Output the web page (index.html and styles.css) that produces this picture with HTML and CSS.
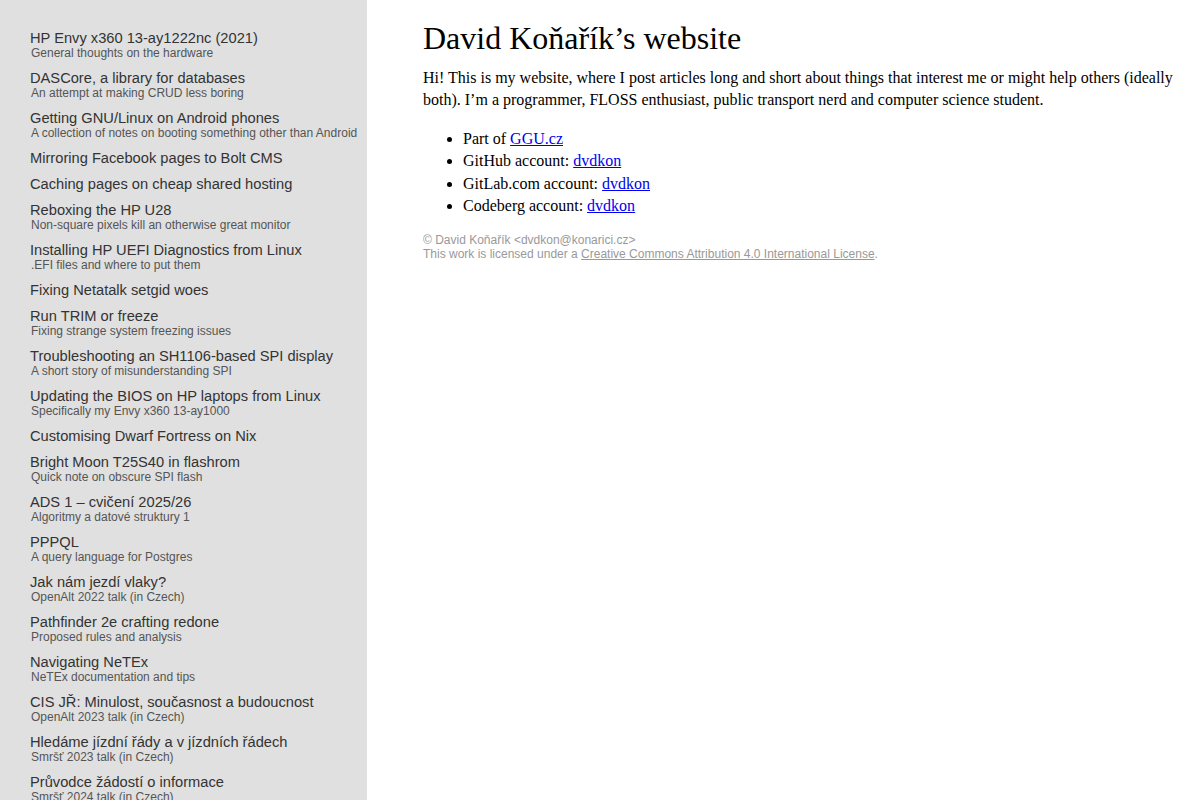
FILE: index.html
```html
<!DOCTYPE html>
<html lang="en">
<head>
<meta charset="utf-8">
<title>David Koňařík’s website</title>
<link rel="stylesheet" href="styles.css">
</head>
<body>
<div class="page">
  <nav class="sidebar">
    <a class="item" href="#"><span class="title">HP Envy x360 13-ay1222nc (2021)</span><span class="sub">General thoughts on the hardware</span></a>
    <a class="item" href="#"><span class="title">DASCore, a library for databases</span><span class="sub">An attempt at making CRUD less boring</span></a>
    <a class="item" href="#"><span class="title">Getting GNU/Linux on Android phones</span><span class="sub">A collection of notes on booting something other than Android</span></a>
    <a class="item" href="#"><span class="title">Mirroring Facebook pages to Bolt CMS</span></a>
    <a class="item" href="#"><span class="title">Caching pages on cheap shared hosting</span></a>
    <a class="item" href="#"><span class="title">Reboxing the HP U28</span><span class="sub">Non-square pixels kill an otherwise great monitor</span></a>
    <a class="item" href="#"><span class="title">Installing HP UEFI Diagnostics from Linux</span><span class="sub">.EFI files and where to put them</span></a>
    <a class="item" href="#"><span class="title">Fixing Netatalk setgid woes</span></a>
    <a class="item" href="#"><span class="title">Run TRIM or freeze</span><span class="sub">Fixing strange system freezing issues</span></a>
    <a class="item" href="#"><span class="title">Troubleshooting an SH1106-based SPI display</span><span class="sub">A short story of misunderstanding SPI</span></a>
    <a class="item" href="#"><span class="title">Updating the BIOS on HP laptops from Linux</span><span class="sub">Specifically my Envy x360 13-ay1000</span></a>
    <a class="item" href="#"><span class="title">Customising Dwarf Fortress on Nix</span></a>
    <a class="item" href="#"><span class="title">Bright Moon T25S40 in flashrom</span><span class="sub">Quick note on obscure SPI flash</span></a>
    <a class="item" href="#"><span class="title">ADS 1 – cvičení 2025/26</span><span class="sub">Algoritmy a datové struktury 1</span></a>
    <a class="item" href="#"><span class="title">PPPQL</span><span class="sub">A query language for Postgres</span></a>
    <a class="item" href="#"><span class="title">Jak nám jezdí vlaky?</span><span class="sub">OpenAlt 2022 talk (in Czech)</span></a>
    <a class="item" href="#"><span class="title">Pathfinder 2e crafting redone</span><span class="sub">Proposed rules and analysis</span></a>
    <a class="item" href="#"><span class="title">Navigating NeTEx</span><span class="sub">NeTEx documentation and tips</span></a>
    <a class="item" href="#"><span class="title">CIS JŘ: Minulost, současnost a budoucnost</span><span class="sub">OpenAlt 2023 talk (in Czech)</span></a>
    <a class="item" href="#"><span class="title">Hledáme jízdní řády a v jízdních řádech</span><span class="sub">Smršť 2023 talk (in Czech)</span></a>
    <a class="item" href="#"><span class="title">Průvodce žádostí o informace</span><span class="sub">Smršť 2024 talk (in Czech)</span></a>
  </nav>
  <main class="main">
    <h1 class="heading">David Koňařík’s website</h1>
    <p class="intro">Hi! This is my website, where I post articles long and short about things that interest me or might help others (ideally both). I’m a programmer, FLOSS enthusiast, public transport nerd and computer science student.</p>
    <ul class="links">
      <li>Part of <a href="#">GGU.cz</a></li>
      <li>GitHub account: <a href="#">dvdkon</a></li>
      <li>GitLab.com account: <a href="#">dvdkon</a></li>
      <li>Codeberg account: <a href="#">dvdkon</a></li>
    </ul>
    <footer class="footer">
      <div>© David Koňařík &lt;dvdkon@konarici.cz&gt;</div>
      <div>This work is licensed under a <a href="#">Creative Commons Attribution 4.0 International License</a>.</div>
    </footer>
  </main>
</div>
</body>
</html>
```
FILE: styles.css
```css
html, body {
  margin: 0;
  padding: 0;
  background: #ffffff;
}

.page {
  display: flex;
  min-height: 100vh;
  align-items: stretch;
}

.sidebar {
  flex: 0 0 367px;
  width: 367px;
  box-sizing: border-box;
  background: #e0e0e0;
  padding: 30px 0 0 30px;
  display: flex;
  flex-direction: column;
  font-family: "Liberation Sans", Arial, sans-serif;
}

.item {
  display: flex;
  flex-direction: column;
  text-decoration: none;
  padding-bottom: 10px;
}

.title {
  font-size: 14.667px;
  line-height: 16px;
  color: #333333;
}

.sub {
  font-size: 12px;
  line-height: 14px;
  color: #555555;
  padding-left: 1px;
}

.main {
  flex: 1 1 auto;
  padding: 20px 20px 0 56px;
  font-family: "Liberation Serif", "Times New Roman", serif;
  font-size: 16px;
  line-height: 1.4;
  color: #000000;
}

.heading {
  font-size: 32px;
  font-weight: normal;
  line-height: 37px;
  margin: 0 0 10px 0;
}

.intro {
  margin: 0 0 17px 0;
  line-height: 22px;
}

.links {
  margin: 0;
  padding-left: 40px;
}

.links a {
  color: #0000ee;
}

.footer {
  margin-top: 15px;
  font-family: "Liberation Sans", Arial, sans-serif;
  font-size: 12px;
  line-height: 14px;
  color: #999999;
}

.footer a {
  color: #999999;
}
```
